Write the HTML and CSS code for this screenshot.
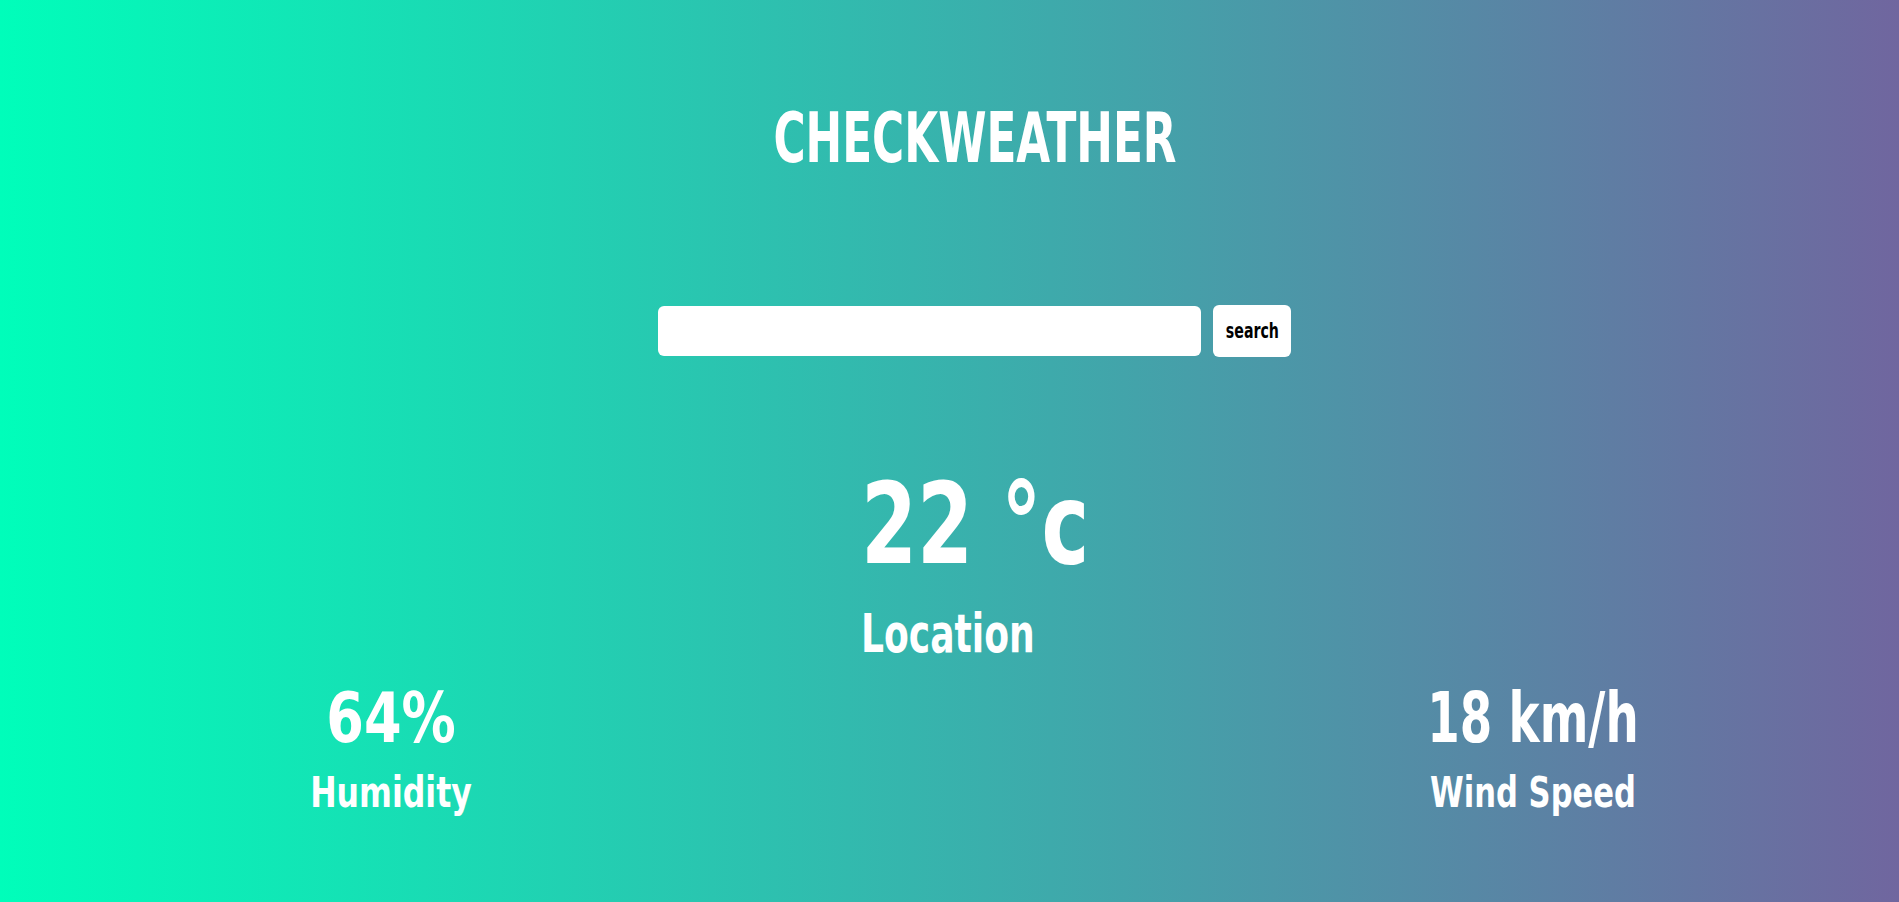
FILE: index.html
```html
<!DOCTYPE html>
<html lang="en">
<head>
<meta charset="utf-8">
<title>CheckWeather</title>
<link rel="stylesheet" href="styles.css">
</head>
<body>
<main class="app">
  <h1 class="title">CHECKWEATHER</h1>
  <form class="search">
    <input class="search-input" type="text" aria-label="City">
    <button class="search-btn" type="button"><span class="search-label">search</span></button>
  </form>
  <section class="current">
    <div class="temp">22 °c</div>
    <div class="location">Location</div>
  </section>
  <section class="details">
    <div class="stat">
      <div class="stat-value humidity-value">64%</div>
      <div class="stat-label humidity-label">Humidity</div>
    </div>
    <div class="stat">
      <div class="stat-value wind-value">18 km/h</div>
      <div class="stat-label wind-label">Wind Speed</div>
    </div>
  </section>
</main>
</body>
</html>
```

FILE: styles.css
```css
* { box-sizing: border-box; }
html, body { height: 100%; }
body {
  margin: 0;
  background: linear-gradient(to right, #00feba, #70669f);
  color: #fff;
  font-family: "DejaVu Sans Condensed", "DejaVu Sans", sans-serif;
  font-weight: 700;
}
.app {
  display: flex;
  flex-direction: column;
  min-height: 100%;
}
.title {
  margin: 98px 0 0 50px;
  align-self: center;
  font-size: 70px;
  line-height: 80px;
  font-weight: 700;
  transform: scaleX(0.695);
}
.search {
  display: flex;
  justify-content: center;
  align-items: center;
  gap: 12px;
  margin-top: 127px;
  padding-left: 50px;
}
.search-input {
  width: 543px;
  height: 50px;
  border: none;
  border-radius: 6px;
  background: #fff;
  outline: none;
}
.search-btn {
  width: 78px;
  height: 52px;
  border: none;
  border-radius: 6px;
  background: #fff;
  color: #000;
  font-family: inherit;
  font-weight: 700;
  font-size: 21px;
  padding: 0;
}
.search-label {
  display: inline-block;
  transform: scaleX(0.75);
}
.current {
  padding-left: 861px;
  margin-top: 110px;
}
.temp {
  font-size: 112px;
  line-height: 115px;
  transform: scaleX(0.8);
  transform-origin: left center;
}
.location {
  font-size: 53.5px;
  line-height: 60px;
  margin-top: 21.5px;
  transform: scaleX(0.75);
  transform-origin: left center;
}
.details {
  display: flex;
  justify-content: space-between;
  padding-left: 241px;
  padding-right: 216px;
  margin-top: 14.5px;
}
.stat {
  width: 300px;
  text-align: center;
}
.stat-value {
  font-size: 68.6px;
  line-height: 80px;
}
.stat-label {
  font-size: 42.5px;
  line-height: 50px;
  margin-top: 10px;
}
.humidity-value { transform: scaleX(0.877); }
.wind-value { transform: scaleX(0.757); }
.humidity-label { transform: scaleX(0.825); }
.wind-label { transform: scaleX(0.8); }
```
